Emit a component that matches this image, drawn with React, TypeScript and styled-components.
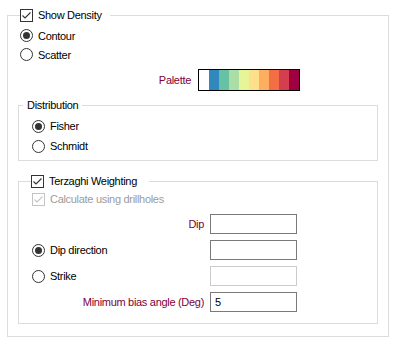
import React from "react";
import styled, { createGlobalStyle } from "styled-components";

const GlobalStyle = createGlobalStyle`
  body {
    margin: 0;
    background: #ffffff;
    font-family: "Liberation Sans", Arial, sans-serif;
    font-size: 11px;
    letter-spacing: -0.3px;
    color: #000000;
  }
`;

const Page = styled.div`
  width: 395px;
  height: 347px;
  padding: 8px 0 0 7px;
  box-sizing: border-box;
`;

const Group = styled.fieldset<{ $inset?: boolean }>`
  margin: ${(p) => (p.$inset ? "0 -1px" : "0")};
  width: ${(p) => (p.$inset ? "auto" : "382px")};
  box-sizing: border-box;
  border: 1px solid #dcdcdc;
  min-width: 0;
  padding: ${(p) => (p.$inset ? "0 12px 4px 12px" : "0 11px 12px 11px")};
`;

const Legend = styled.legend<{ $gap?: number; $shift?: number }>`
  display: flex;
  align-items: center;
  gap: 5px;
  height: 14px;
  line-height: 14px;
  padding: 0 ${(p) => p.$gap ?? 8}px 0 0;
  margin-left: ${(p) => p.$shift ?? 0}px;
`;

const TextLegend = styled.legend`
  line-height: 14px;
  padding: 0 4px;
  margin-left: -8px;
`;

const Option = styled.label<{ $h?: number; $disabled?: boolean }>`
  display: flex;
  align-items: center;
  gap: 5px;
  height: ${(p) => p.$h ?? 19}px;
  color: ${(p) => (p.$disabled ? "#9b9b9b" : "#000000")};
  white-space: nowrap;
`;

const Mark = styled.svg`
  width: 13px;
  height: 13px;
  flex: none;
  display: block;
`;

const Stack = styled.div<{ $top: number; $gap?: number }>`
  display: flex;
  flex-direction: column;
  gap: ${(p) => p.$gap ?? 0}px;
  padding-top: ${(p) => p.$top}px;
  padding-left: 1px;
`;

const PaletteRow = styled.div`
  display: grid;
  grid-template-columns: 171px 102px;
  column-gap: 7px;
  align-items: center;
  margin: 3px 0 7px 1px;
`;

const FieldLabel = styled.span<{ $accent?: boolean; $right?: boolean }>`
  color: ${(p) => (p.$accent ? "#800038" : "#000000")};
  text-align: ${(p) => (p.$right ? "right" : "left")};
  white-space: nowrap;
`;

const Swatches = styled.div`
  display: flex;
  height: 22px;
  box-sizing: border-box;
  border: 1px solid #000000;
`;

const Swatch = styled.div<{ $c: string }>`
  flex: 1;
  background: ${(p) => p.$c};
`;

const FieldRow = styled.div`
  display: grid;
  grid-template-columns: 1fr 87px;
  column-gap: 6px;
  align-items: center;
  width: 265px;
  height: 20px;
`;

const Input = styled.input`
  box-sizing: border-box;
  width: 87px;
  height: 20px;
  margin: 0;
  padding: 0 4px;
  border: 1px solid #7a7a7a;
  background: #ffffff;
  font: inherit;
  color: #000000;
  outline: none;
  &:disabled {
    border-color: #cccccc;
    background: #ffffff;
  }
`;

const Spacer = styled.div`
  height: 13px;
`;

const CheckBox: React.FC<{ disabled?: boolean }> = ({ disabled }) => {
  const c = disabled ? "#c4c4c4" : "#333333";
  return (
    <Mark viewBox="0 0 13 13">
      <rect x="0.5" y="0.5" width="12" height="12" fill="#fff" stroke={c} />
      <path d="M2.5 6.5 L5 9 L10.5 3.5" fill="none" stroke={c} strokeWidth="1.1" />
    </Mark>
  );
};

const Radio: React.FC<{ on?: boolean }> = ({ on }) => (
  <Mark viewBox="0 0 13 13">
    <circle cx="6.5" cy="6.5" r="6" fill="#fff" stroke="#333333" />
    {on && <circle cx="6.5" cy="6.5" r="3.5" fill="#333333" />}
  </Mark>
);

const palette = [
  "#ffffff",
  "#3288bd",
  "#66c2a5",
  "#abdda4",
  "#e6f598",
  "#fee08b",
  "#fdae61",
  "#f46d43",
  "#d53e4f",
  "#9e0142",
];

const App: React.FC = () => {
  return (
    <Page>
      <GlobalStyle />
      <Group>
        <Legend $shift={1}>
          <CheckBox />
          <span>Show Density</span>
        </Legend>
        <Stack $top={4}>
          <Option>
            <Radio on />
            Contour
          </Option>
          <Option>
            <Radio />
            Scatter
          </Option>
        </Stack>
        <PaletteRow style={{ marginTop: 5 }}>
          <FieldLabel $accent $right>
            Palette
          </FieldLabel>
          <Swatches>
            {palette.map((c) => (
              <Swatch key={c} $c={c} />
            ))}
          </Swatches>
        </PaletteRow>

        <Group $inset>
          <TextLegend>Distribution</TextLegend>
          <Stack $top={4}>
            <Option $h={20}>
              <Radio on />
              Fisher
            </Option>
            <Option $h={20}>
              <Radio />
              Schmidt
            </Option>
          </Stack>
        </Group>

        <Spacer />

        <Group $inset style={{ paddingBottom: 11 }}>
          <Legend $gap={12}>
            <CheckBox />
            <span>Terzaghi Weighting</span>
          </Legend>
          <Stack $top={2} $gap={6}>
            <Option $h={18} $disabled>
              <CheckBox disabled />
              Calculate using drillholes
            </Option>
            <FieldRow>
              <FieldLabel $accent $right>
                Dip
              </FieldLabel>
              <Input />
            </FieldRow>
            <FieldRow>
              <Option $h={20}>
                <Radio on />
                Dip direction
              </Option>
              <Input />
            </FieldRow>
            <FieldRow>
              <Option $h={20}>
                <Radio />
                Strike
              </Option>
              <Input disabled />
            </FieldRow>
            <FieldRow>
              <FieldLabel $accent $right>
                Minimum bias angle (Deg)
              </FieldLabel>
              <Input defaultValue="5" />
            </FieldRow>
          </Stack>
        </Group>
      </Group>
    </Page>
  );
};

export default App;
